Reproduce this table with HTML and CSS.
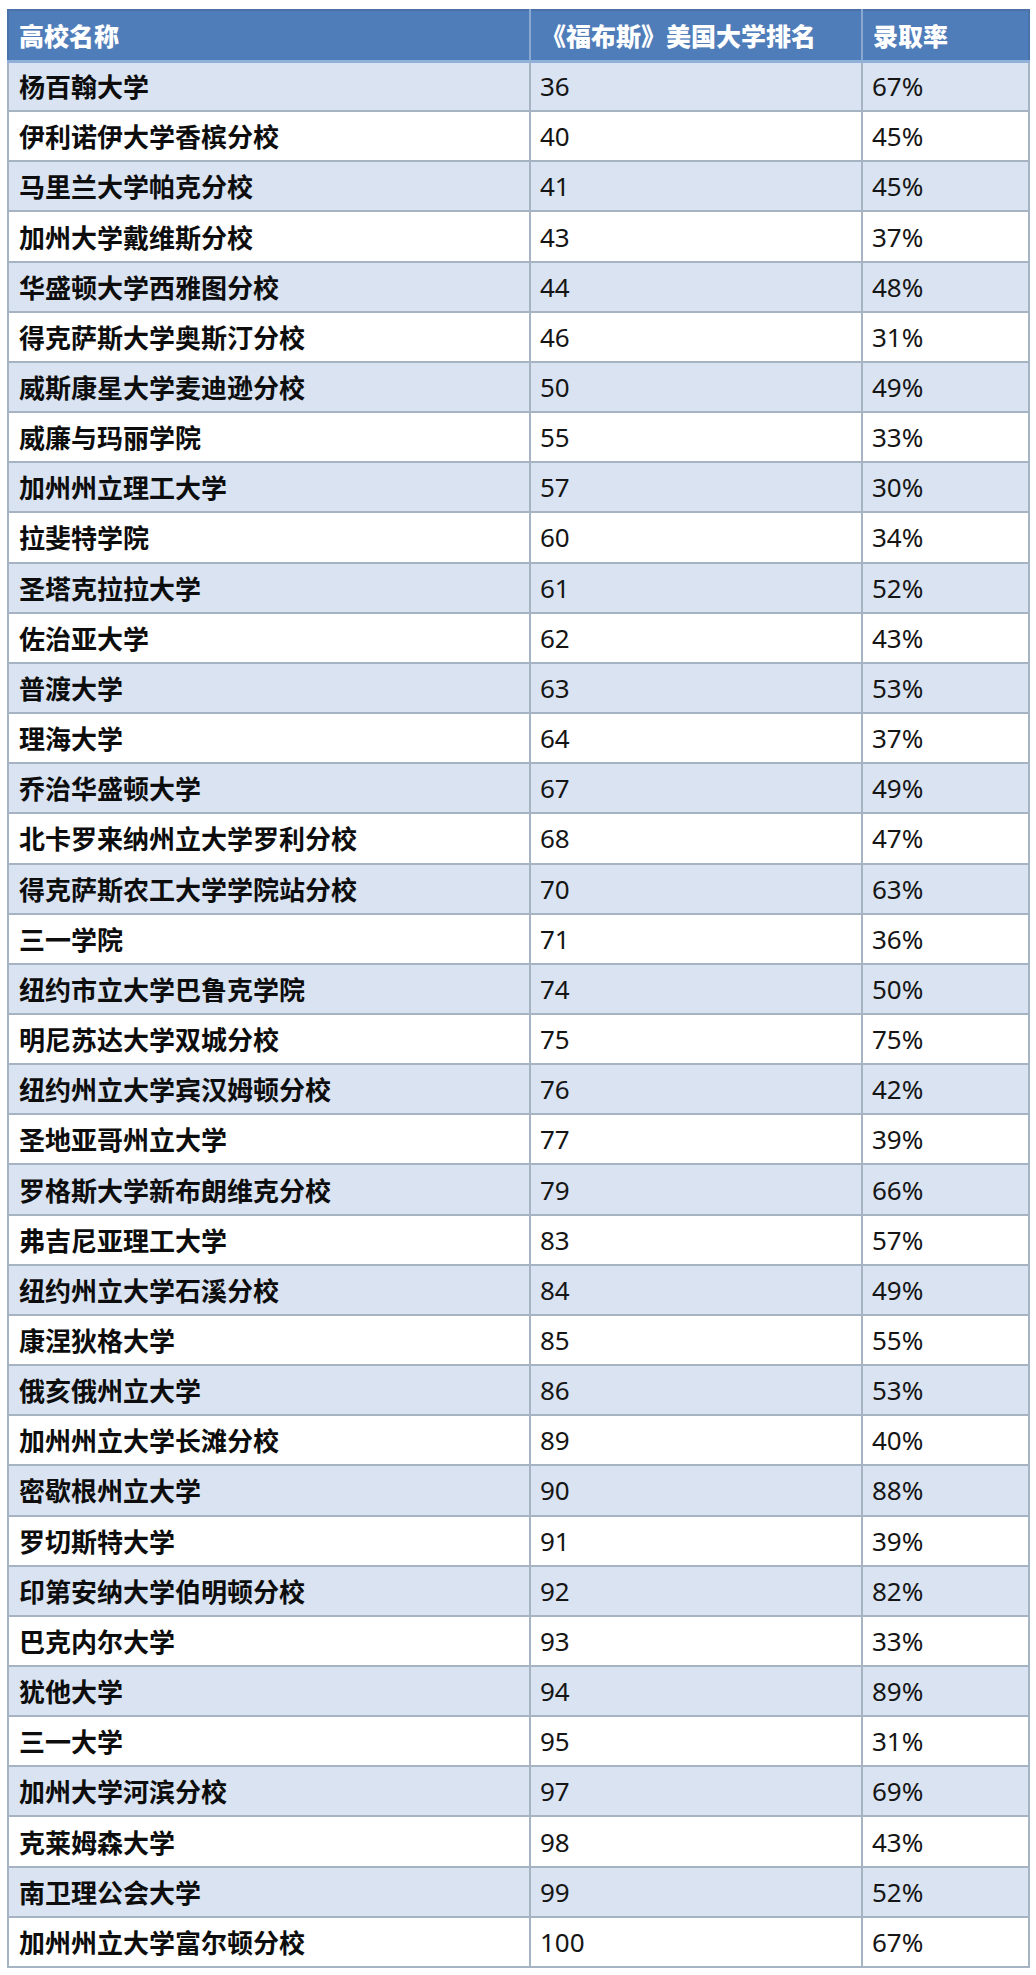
FILE: index.html
```html
<!DOCTYPE html>
<html lang="zh-CN">
<head>
<meta charset="utf-8">
<title>福布斯美国大学排名与录取率</title>
<link rel="stylesheet" href="styles.css">
</head>
<body>
<div class="page">
<table class="rank-table">
<colgroup>
<col class="c-name"><col class="c-rank"><col class="c-rate">
</colgroup>
<thead>
<tr><th>高校名称</th><th>《福布斯》美国大学排名</th><th>录取率</th></tr>
</thead>
<tbody>
<tr><td>杨百翰大学</td><td>36</td><td>67%</td></tr>
<tr><td>伊利诺伊大学香槟分校</td><td>40</td><td>45%</td></tr>
<tr><td>马里兰大学帕克分校</td><td>41</td><td>45%</td></tr>
<tr><td>加州大学戴维斯分校</td><td>43</td><td>37%</td></tr>
<tr><td>华盛顿大学西雅图分校</td><td>44</td><td>48%</td></tr>
<tr><td>得克萨斯大学奥斯汀分校</td><td>46</td><td>31%</td></tr>
<tr><td>威斯康星大学麦迪逊分校</td><td>50</td><td>49%</td></tr>
<tr><td>威廉与玛丽学院</td><td>55</td><td>33%</td></tr>
<tr><td>加州州立理工大学</td><td>57</td><td>30%</td></tr>
<tr><td>拉斐特学院</td><td>60</td><td>34%</td></tr>
<tr><td>圣塔克拉拉大学</td><td>61</td><td>52%</td></tr>
<tr><td>佐治亚大学</td><td>62</td><td>43%</td></tr>
<tr><td>普渡大学</td><td>63</td><td>53%</td></tr>
<tr><td>理海大学</td><td>64</td><td>37%</td></tr>
<tr><td>乔治华盛顿大学</td><td>67</td><td>49%</td></tr>
<tr><td>北卡罗来纳州立大学罗利分校</td><td>68</td><td>47%</td></tr>
<tr><td>得克萨斯农工大学学院站分校</td><td>70</td><td>63%</td></tr>
<tr><td>三一学院</td><td>71</td><td>36%</td></tr>
<tr><td>纽约市立大学巴鲁克学院</td><td>74</td><td>50%</td></tr>
<tr><td>明尼苏达大学双城分校</td><td>75</td><td>75%</td></tr>
<tr><td>纽约州立大学宾汉姆顿分校</td><td>76</td><td>42%</td></tr>
<tr><td>圣地亚哥州立大学</td><td>77</td><td>39%</td></tr>
<tr><td>罗格斯大学新布朗维克分校</td><td>79</td><td>66%</td></tr>
<tr><td>弗吉尼亚理工大学</td><td>83</td><td>57%</td></tr>
<tr><td>纽约州立大学石溪分校</td><td>84</td><td>49%</td></tr>
<tr><td>康涅狄格大学</td><td>85</td><td>55%</td></tr>
<tr><td>俄亥俄州立大学</td><td>86</td><td>53%</td></tr>
<tr><td>加州州立大学长滩分校</td><td>89</td><td>40%</td></tr>
<tr><td>密歇根州立大学</td><td>90</td><td>88%</td></tr>
<tr><td>罗切斯特大学</td><td>91</td><td>39%</td></tr>
<tr><td>印第安纳大学伯明顿分校</td><td>92</td><td>82%</td></tr>
<tr><td>巴克内尔大学</td><td>93</td><td>33%</td></tr>
<tr><td>犹他大学</td><td>94</td><td>89%</td></tr>
<tr><td>三一大学</td><td>95</td><td>31%</td></tr>
<tr><td>加州大学河滨分校</td><td>97</td><td>69%</td></tr>
<tr><td>克莱姆森大学</td><td>98</td><td>43%</td></tr>
<tr><td>南卫理公会大学</td><td>99</td><td>52%</td></tr>
<tr><td>加州州立大学富尔顿分校</td><td>100</td><td>67%</td></tr>
</tbody>
</table>
</div>
</body>
</html>
```
FILE: styles.css
```css
html, body {
  margin: 0;
  padding: 0;
  background: #ffffff;
}

.page {
  padding: 9px 0 0 7px;
}

.rank-table {
  width: 1021px;
  border-collapse: collapse;
  table-layout: fixed;
  font-family: "Noto Sans", "Noto Sans CJK SC", sans-serif;
  color: #111111;
  border: 2px solid #a3b0c0;
}

.c-name { width: 522px; }
.c-rank { width: 332px; }
.c-rate { width: 167px; }

.rank-table thead tr {
  height: 51px;
  background: #4f7dba;
}

.rank-table th {
  text-align: left;
  font-family: "Noto Sans CJK SC", sans-serif;
  font-weight: 900;
  font-size: 25px;
  color: #ffffff;
  padding: 0 0 0 10px;
  border-left: 2px solid #8aa8cf;
  border-right: 2px solid #8aa8cf;
  border-top: 2px solid #4a72a8;
  border-bottom: 3px solid #8fb0d9;
  line-height: 1;
}

.rank-table th:first-child { border-left: 2px solid #4a72a8; }
.rank-table th:last-child { border-right: 2px solid #4a72a8; }

.rank-table tbody tr {
  height: 50.16px;
  background: #ffffff;
}

.rank-table tbody tr:nth-child(odd) {
  background: #d9e3f1;
}

.rank-table td {
  border: 2px solid #a6b3c3;
  padding: 0 0 0 10px;
  font-size: 25px;
  line-height: 1;
  vertical-align: middle;
  white-space: nowrap;
}

.rank-table td:first-child {
  font-family: "Noto Sans CJK SC", sans-serif;
  font-weight: 700;
  font-size: 26px;
  color: #0d0d0d;
}

.rank-table td:nth-child(2),
.rank-table td:nth-child(3) {
  padding-left: 9px;
  font-size: 26px;
  color: #151515;
}
```
